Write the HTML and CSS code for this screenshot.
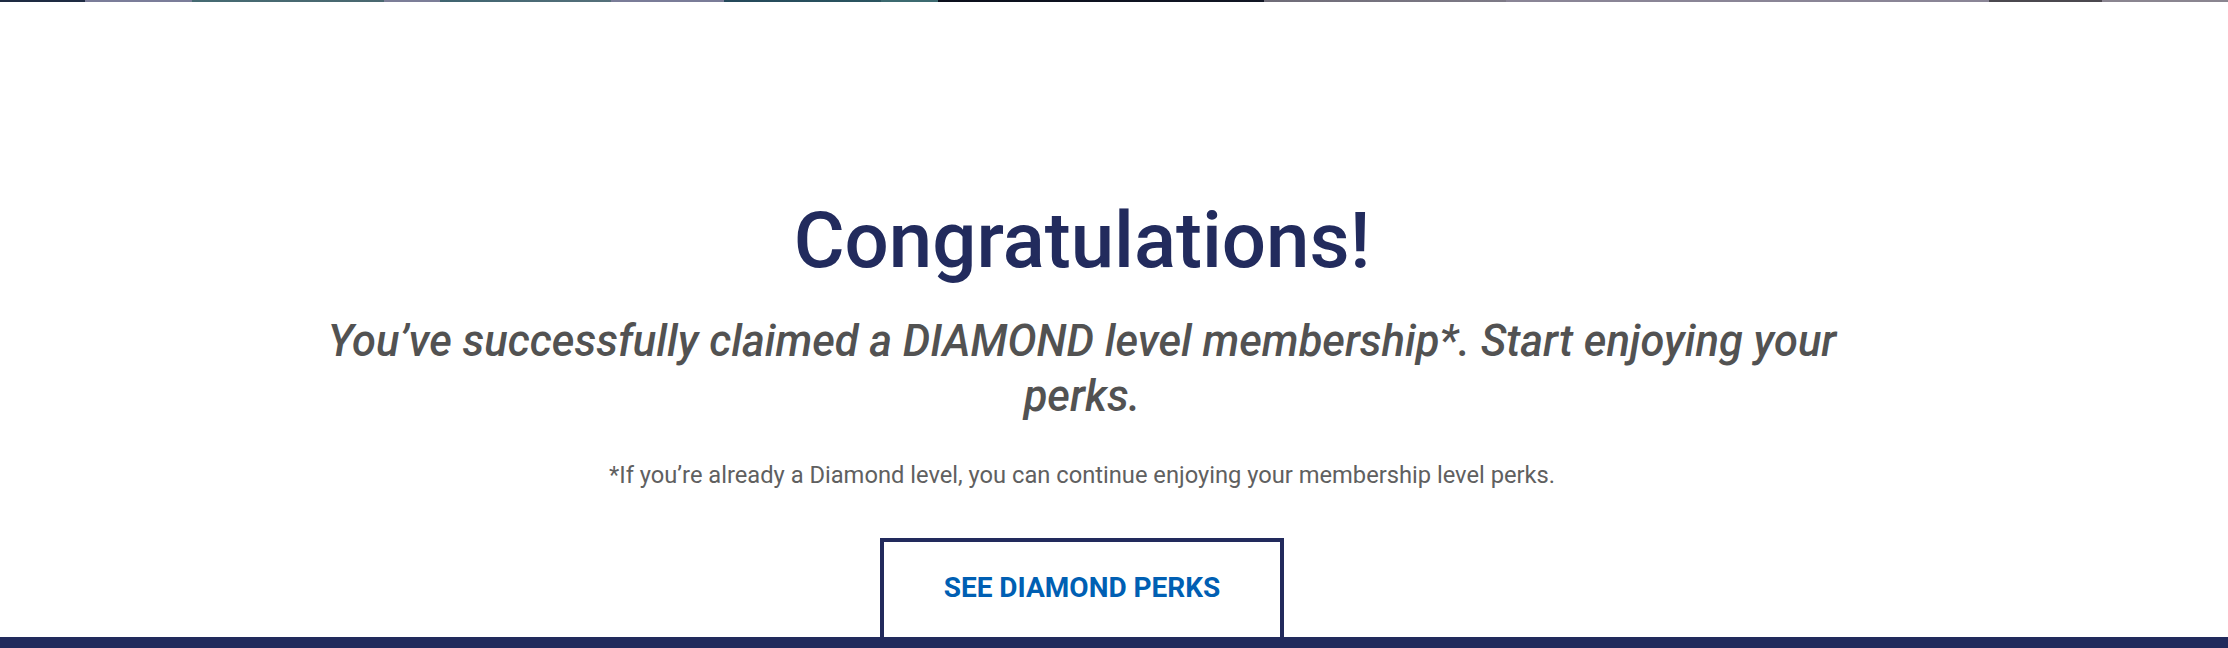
FILE: index.html
```html
<!DOCTYPE html>
<html lang="en">
<head>
<meta charset="utf-8">
<title>Congratulations!</title>
<link rel="stylesheet" href="styles.css">
</head>
<body>
<div class="page">
  <div class="hero-strip"></div>
  <main class="main">
    <section class="confirm">
      <h1 class="confirm-title">Congratulations!</h1>
      <p class="confirm-lead">You’ve successfully claimed a DIAMOND level membership*. Start enjoying your perks.</p>
      <p class="confirm-note">*If you’re already a Diamond level, you can continue enjoying your membership level perks.</p>
      <a class="confirm-btn" href="#">SEE DIAMOND PERKS</a>
    </section>
  </main>
  <footer class="footer-bar"></footer>
</div>
</body>
</html>
```
FILE: styles.css
```css
html, body {
  margin: 0;
  padding: 0;
  height: 100%;
  overflow: hidden;
  background: #ffffff;
}

.page {
  display: flex;
  flex-direction: column;
  height: 648px;
  font-family: Roboto, "Liberation Sans", sans-serif;
}

.hero-strip {
  flex: 0 0 2px;
  background: linear-gradient(to right,
    #1e2b42 0, #1e2b42 85px,
    #7b7d99 85px, #7b7d99 192px,
    #456a72 192px, #4a6870 384px,
    #7c7e98 384px, #7c7e98 440px,
    #3f6470 440px, #55707a 611px,
    #7a7c98 611px, #7a7c98 724px,
    #24485a 724px, #2b5560 881px,
    #3c6a70 881px, #3c6a70 938px,
    #0b0f1c 938px, #111624 1264px,
    #6f6c78 1264px, #7d7a86 1506px,
    #8a8596 1506px, #8a8596 1989px,
    #4b484f 1989px, #4b484f 2102px,
    #8a8590 2102px, #8a8590 2228px);
}

.main {
  flex: 1 1 auto;
  overflow: hidden;
  padding-right: 64px;
}

.confirm {
  display: flex;
  flex-direction: column;
  align-items: center;
  text-align: center;
  padding-top: 192px;
}

.confirm-title {
  margin: 0;
  font-size: 78px;
  line-height: 94px;
  font-weight: 500;
  color: #222b5d;
}

.confirm-lead {
  margin: 26px 0 0;
  max-width: 1570px;
  font-size: 43.5px;
  line-height: 55px;
  font-style: italic;
  font-weight: 500;
  color: #525252;
}

.confirm-note {
  margin: 36px 0 0;
  font-size: 23.7px;
  line-height: 30px;
  color: #606060;
}

.confirm-btn {
  margin-top: 48px;
  box-sizing: border-box;
  width: 404px;
  padding: 29px 0 40px;
  border: 4px solid #222a5c;
  font-size: 28px;
  line-height: 33px;
  font-weight: 700;
  color: #005fb3;
  text-decoration: none;
  background: #ffffff;
}

.footer-bar {
  flex: 0 0 11px;
  background: #212a5c;
}
```
